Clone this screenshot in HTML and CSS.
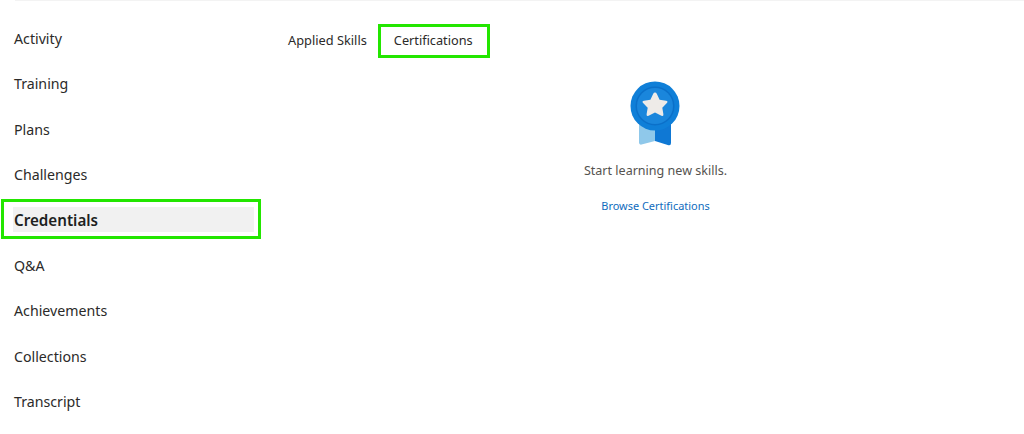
FILE: index.html
```html
<!DOCTYPE html>
<html lang="en">
<head>
<meta charset="utf-8">
<title>Credentials</title>
<link rel="stylesheet" href="styles.css">
</head>
<body>
<div class="topline"></div>
<div class="page">
  <nav class="side">
    <a class="side-item">Activity</a>
    <a class="side-item">Training</a>
    <a class="side-item">Plans</a>
    <a class="side-item">Challenges</a>
    <a class="side-item active">Credentials</a>
    <a class="side-item">Q&amp;A</a>
    <a class="side-item">Achievements</a>
    <a class="side-item">Collections</a>
    <a class="side-item">Transcript</a>
  </nav>
  <main class="main">
    <div class="tabs">
      <a class="tab">Applied Skills</a>
      <a class="tab selected">Certifications</a>
    </div>
    <section class="empty">
      <svg class="badge" width="50" height="66" viewBox="0 0 50 66" aria-hidden="true">
        <path d="M9 40 L25 40 L25 60 L11.5 63.6 Q9 64 9 61.5 Z" fill="#8fc8ea"/>
        <path d="M25 40 L41 40 L41 62 Q41 64.8 38.5 64.2 L25 60 Z" fill="#0f78d4"/>
        <circle cx="25" cy="25" r="24.5" fill="#0f7fd8"/>
        <circle cx="25" cy="25" r="19.5" fill="#0b70c9"/>
        <circle cx="25" cy="25" r="18" fill="#1a86dc"/>
        <path d="M25 11.6 Q26.2 11.6 26.9 13 L29.6 18.8 L36 19.7 Q38.4 20.2 36.9 22.1 L32.3 26.7 L33.4 33.2 Q33.7 35.6 31.5 34.7 L25 31.4 L18.5 34.7 Q16.3 35.6 16.6 33.2 L17.7 26.7 L13.1 22.1 Q11.6 20.2 14 19.7 L20.4 18.8 L23.1 13 Q23.8 11.6 25 11.6 Z" fill="#eeebe8"/>
      </svg>
      <p class="empty-text">Start learning new skills.</p>
      <a class="browse">Browse Certifications</a>
    </section>
  </main>
</div>
</body>
</html>
```

FILE: styles.css
```css
* { box-sizing: border-box; }
html, body { margin: 0; padding: 0; background: #fff; }
body {
  font-family: "Noto Sans", "Open Sans", sans-serif;
  color: #252423;
  height: 434px;
  overflow: hidden;
}
.topline { height: 1px; margin-left: 15px; background: #f3f3f3; }
.page { display: flex; }
.side {
  width: 254px;
  padding: 24.85px 0 0 13px;
  display: flex;
  flex-direction: column;
  gap: 20.4px;
  flex: none;
}
.side-item {
  position: relative;
  display: block;
  height: 25px;
  line-height: 25px;
  padding-left: 1px;
  font-size: 14.2px;
  color: #2b2a29;
}
.side-item.active {
  background: #f1f1f1;
  font-size: 15.2px;
  line-height: 26px;
  font-weight: 600;
  color: #201f1e;
}
.side-item.active::after {
  content: "";
  position: absolute;
  top: -8px;
  bottom: -7px;
  left: -12px;
  right: -7px;
  border: 3px solid #23e600;
}
.main { flex: 1; padding: 23px 1px 0 34px; min-width: 0; }
.tabs { display: flex; height: 34px; align-items: center; }
.tab {
  position: relative;
  font-size: 12.8px;
  line-height: 33px;
  height: 34px;
  color: #2b2a29;
}
.tab.selected { margin-left: 27px; font-size: 12.72px; }
.tab.selected::after {
  content: "";
  position: absolute;
  top: 0;
  bottom: 0;
  left: -16px;
  right: -17px;
  border: 3px solid #23e600;
}
.empty {
  display: flex;
  flex-direction: column;
  align-items: center;
  padding-top: 23px;
}
.badge { display: block; margin-right: 1px; }
.empty-text {
  margin: 14px 0 0;
  font-size: 12.55px;
  line-height: 20px;
  color: #55534f;
}
.browse {
  margin-top: 16px;
  font-size: 10.95px;
  line-height: 18px;
  color: #0f6cbd;
}
```
